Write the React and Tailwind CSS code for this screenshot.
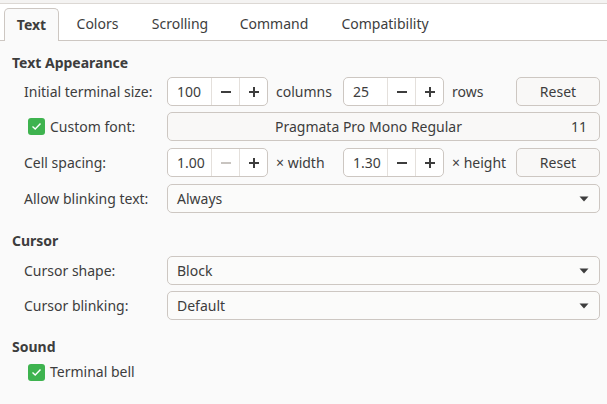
import React from 'react'

const font = { fontFamily: '"Noto Sans", "Open Sans", sans-serif' }

const tabs = [
  { label: 'Colors', w: 'w-[77px]' },
  { label: 'Scrolling', w: 'w-[88px]' },
  { label: 'Command', w: 'w-[100px]' },
  { label: 'Compatibility', w: 'w-[122px]' },
]

function Minus({ dim }) {
  return (
    <svg width="12" height="12" viewBox="0 0 12 12">
      <rect x="1" y="5" width="10" height="2" fill={dim ? '#c8c4c0' : '#3d3d3d'} />
    </svg>
  )
}

function Plus() {
  return (
    <svg width="12" height="12" viewBox="0 0 12 12">
      <rect x="1" y="5" width="10" height="2" fill="#3d3d3d" />
      <rect x="5" y="1" width="2" height="10" fill="#3d3d3d" />
    </svg>
  )
}

function Spin({ value, minusDisabled }) {
  return (
    <div className="flex h-[29px] w-[101px] shrink-0 overflow-hidden rounded-[5px] border border-[#cdc7c2] bg-white">
      <div className="flex w-[43px] items-center pl-[9px]">{value}</div>
      <div className="flex w-[28px] items-center justify-center border-l border-[#e4e0dc]">
        <Minus dim={minusDisabled} />
      </div>
      <div className="flex w-[28px] items-center justify-center border-l border-[#e4e0dc]">
        <Plus />
      </div>
    </div>
  )
}

function Check() {
  return (
    <div className="flex h-[17px] w-[17px] shrink-0 items-center justify-center rounded-[3px] bg-[#3eb34f]">
      <svg width="11" height="9" viewBox="0 0 11 9">
        <path d="M1.5 4.5 L4.2 7 L9.5 1.5" fill="none" stroke="white" strokeWidth="1.4" />
      </svg>
    </div>
  )
}

function Dropdown({ value }) {
  return (
    <div className="flex h-[29px] flex-1 items-center justify-between rounded-[5px] border border-[#cdc7c2] bg-[#fbfbfa] pl-[9px] pr-[10px]">
      <span>{value}</span>
      <svg width="10" height="6" viewBox="0 0 10 6">
        <path d="M0.5 0.5 L9.5 0.5 L5 5.5 Z" fill="#3d3d3d" />
      </svg>
    </div>
  )
}

function ResetButton() {
  return (
    <div className="ml-auto flex h-[29px] w-[84px] items-center justify-center rounded-[5px] border border-[#cdc7c2] bg-[#f9f8f7]">
      Reset
    </div>
  )
}

function Row({ label, children, className = '' }) {
  return (
    <div className={`flex h-[29px] items-center ${className}`}>
      <div className="w-[155px] shrink-0 pl-[12px]">{label}</div>
      {children}
    </div>
  )
}

export default function App() {
  return (
    <div style={font} className="h-[404px] w-[607px] overflow-hidden bg-[#fafafa] text-[14px] leading-[20px] text-[#3d3d3d]">
      <div className="h-[3px] bg-[#f4f3f2]" />
      <div className="h-px bg-[#dcd8d4]" />
      <div className="flex h-[37px] items-end border-b border-[#cdc7c2] bg-white">
        <div className="ml-[4px] -mb-px flex h-[33px] w-[55px] items-center justify-center rounded-t-[5px] border border-b-0 border-[#cdc7c2] bg-[#fafafa] pb-[1px] font-bold">
          Text
        </div>
        {tabs.map((t) => (
          <div key={t.label} className={`flex h-[32px] items-center justify-center pb-[1px] ${t.w}`}>
            {t.label}
          </div>
        ))}
      </div>

      <div className="pl-[12px] pr-[7px]">
        <div className="mt-[12px] font-bold">Text Appearance</div>

        <Row label="Initial terminal size:" className="mt-[4px]">
          <Spin value="100" />
          <div className="w-[75px] shrink-0 pl-[8px]">columns</div>
          <Spin value="25" />
          <div className="pl-[8px]">rows</div>
          <ResetButton />
        </Row>

        <div className="mt-[6px] flex h-[29px] items-center">
          <div className="flex w-[155px] shrink-0 items-center gap-[5px] pl-[16px]">
            <Check />
            <span>Custom font:</span>
          </div>
          <div className="flex h-[29px] flex-1 items-center rounded-[5px] border border-[#cdc7c2] bg-[#f9f8f7]">
            <span className="flex-1 text-center">Pragmata Pro Mono Regular</span>
            <span className="pr-[12px] pl-[2px]">11</span>
          </div>
        </div>

        <Row label="Cell spacing:" className="mt-[7px]">
          <Spin value="1.00" minusDisabled />
          <div className="w-[75px] shrink-0 pl-[8px]">× width</div>
          <Spin value="1.30" />
          <div className="pl-[8px]">× height</div>
          <ResetButton />
        </Row>

        <Row label="Allow blinking text:" className="mt-[7px]">
          <Dropdown value="Always" />
        </Row>

        <div className="mt-[18px] font-bold">Cursor</div>

        <Row label="Cursor shape:" className="mt-[5px]">
          <Dropdown value="Block" />
        </Row>

        <Row label="Cursor blinking:" className="mt-[6px]">
          <Dropdown value="Default" />
        </Row>

        <div className="mt-[17px] font-bold">Sound</div>

        <div className="mt-[5px] flex h-[20px] items-center gap-[5px] pl-[16px]">
          <Check />
          <span>Terminal bell</span>
        </div>
      </div>
    </div>
  )
}
